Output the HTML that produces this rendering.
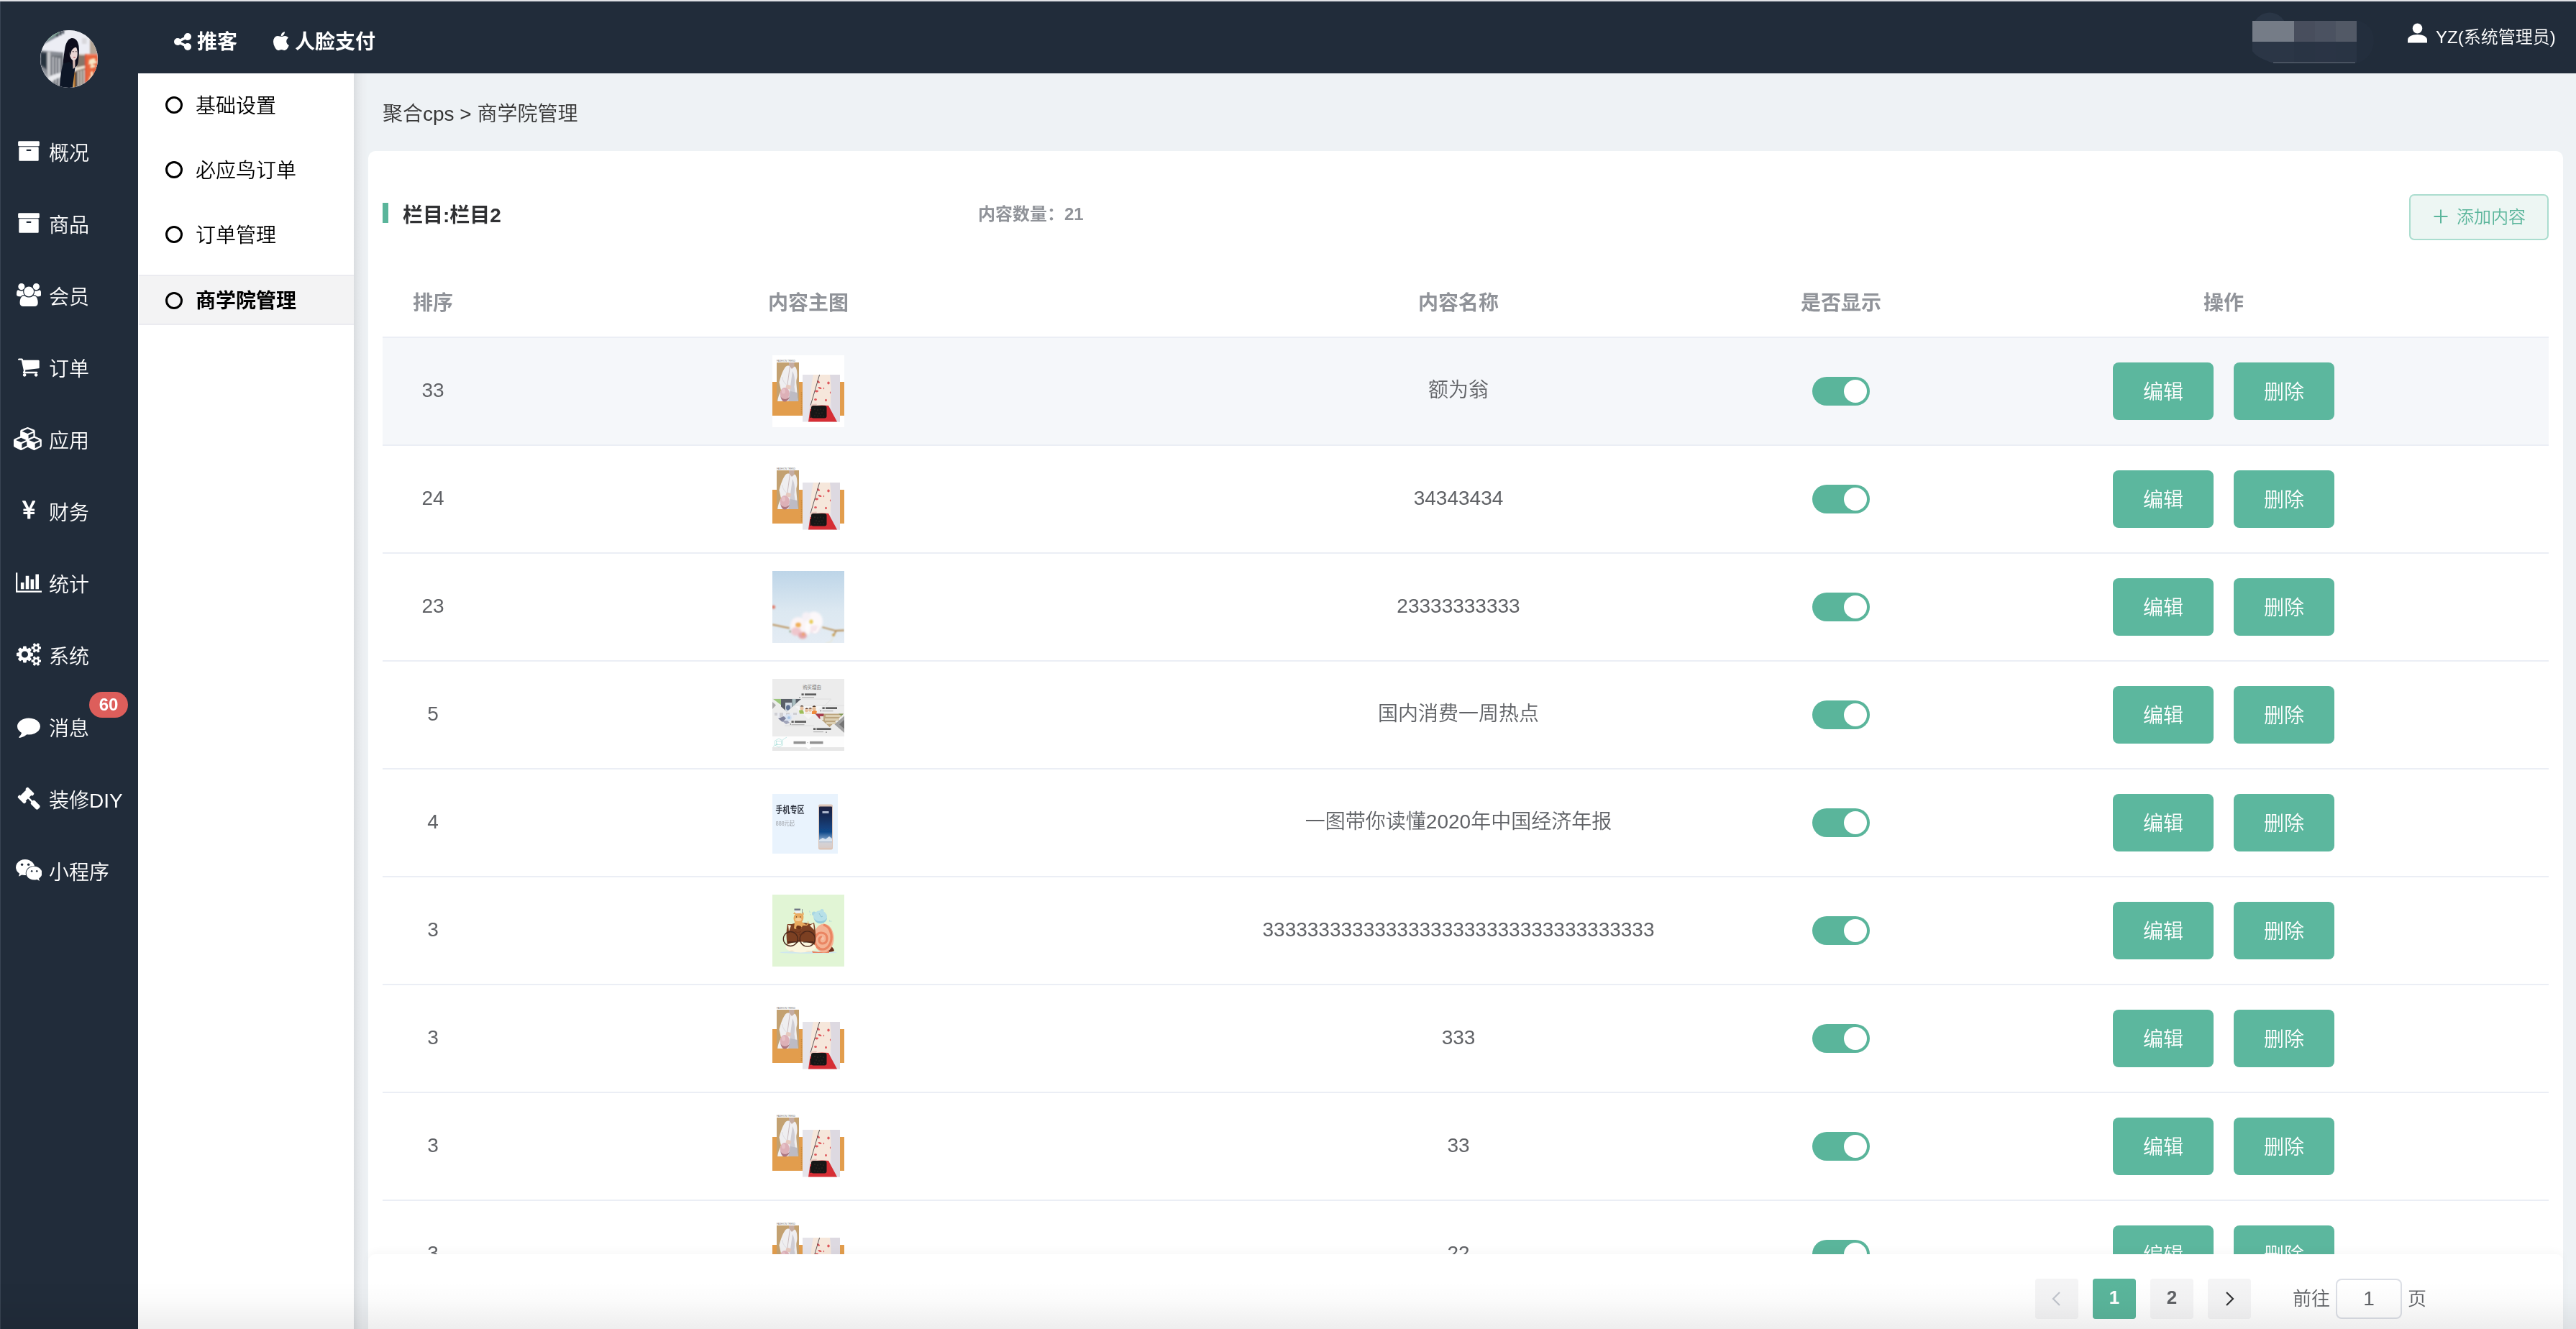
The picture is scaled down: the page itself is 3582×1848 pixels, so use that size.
<!DOCTYPE html>
<html lang="zh-CN"><head><meta charset="utf-8"><title>商学院管理</title>
<style>
*{box-sizing:border-box;margin:0;padding:0}
html,body{width:3582px;height:1848px;overflow:hidden}
body{position:relative;filter:opacity(1);background:#EEF2F5;font-family:"Liberation Sans","Noto Sans CJK SC",sans-serif;color:#606266;font-size:28px;font-weight:350}
.abs{position:absolute}
svg{display:block}
.fa{flex:none}
#topline{left:0;top:0;width:3582px;height:2px;background:linear-gradient(180deg,#DEDFE3 0,#DEDFE3 1px,#E8E9EE 1px,#E8E9EE 2px)}
#leftedge{left:0;top:2px;width:1px;height:1846px;background:#394453}
#left{left:0;top:2px;width:192px;height:1846px;background:#212C3A}
#top{left:192px;top:2px;width:3390px;height:100px;background:#212C3A}
.nav{position:absolute;left:0;width:192px;height:100px}
.nav .ic{position:absolute;left:0;top:-1px;width:80px;height:100px;display:flex;align-items:center;justify-content:center}
.nav .tx{position:absolute;left:68px;top:3px;height:100px;line-height:100px;font-size:28px;color:#fff;white-space:nowrap}
.badge{position:absolute;left:124px;top:962px;width:54px;height:36px;border-radius:18px;background:#DD5E5B;color:#fff;font-weight:bold;font-size:24px;line-height:36px;text-align:center}
.tnav{position:absolute;top:0;height:100px;line-height:100px;color:#fff;font-weight:bold;font-size:28px;white-space:nowrap}
.tnav svg{position:absolute;top:35px}
#side2{left:192px;top:102px;width:300px;height:1746px;background:#fff}
#shade{left:492px;top:102px;width:20px;height:1746px;background:linear-gradient(90deg,#DADDE0 0%,#E4E7EA 30%,#EBEEF1 60%,#EEF2F5 100%)}
.s2{position:absolute;left:0;width:300px;height:70px;line-height:70px;font-size:28px;color:#000;white-space:nowrap}
.s2 i{position:absolute;left:38px;top:23px;width:24px;height:24px;border:3.5px solid #000;border-radius:50%}
.s2 span{position:absolute;left:80px;top:1.5px}
.s2.on{left:1px;width:299px;background:#F3F3F4;border-top:2px solid #EBEBF0;border-bottom:2px solid #EBEBF0;font-weight:bold;line-height:66px}
.s2.on i{left:37px;top:22px}
.s2.on span{left:79px;top:1.5px}
#crumb{left:532px;top:129px;height:60px;line-height:60px;font-size:28px;color:#363636;white-space:nowrap}
#card{left:512px;top:210px;width:3052px;height:1700px;background:#fff;border-radius:10px}
#bar{left:532px;top:282px;width:8px;height:28px;background:#5AB59B}
#title{left:560px;top:269.5px;height:60px;line-height:60px;font-size:28px;font-weight:bold;color:#303133;white-space:nowrap}
#count{left:1360px;top:268px;height:60px;line-height:60px;font-size:24px;font-weight:bold;color:#909399;white-space:nowrap}
#add{left:3350px;top:270px;width:194px;height:64px;border:2px solid #ABDDCF;background:#EDF6F3;border-radius:7px;color:#5AB59B;font-size:24px;line-height:60px;white-space:nowrap}
#add svg{position:absolute;left:32px;top:19px}
#add span{position:absolute;left:64px;top:0}
.th{position:absolute;top:391.5px;height:60px;line-height:60px;font-size:28px;font-weight:bold;color:#909399;text-align:center;white-space:nowrap}
.hl{position:absolute;left:532px;width:3012px;height:2px;background:#EBEEF5}
.row{position:absolute;left:532px;width:3012px;height:148px}
.row.hov{background:#F5F7FA}
.c{position:absolute;top:0;height:148px;display:flex;align-items:center;justify-content:center;font-size:28px;color:#606266;white-space:nowrap}
.c1{left:0;width:140px}
.c2{left:140px;width:904px}
.c3{left:1044px;width:904px}
.c4{left:1948px;width:160px}
.c5{left:2108px;width:904px}
.c span{position:relative;top:-1.500px}
.c span.zh{top:-4px}
.img{position:absolute;left:542px;top:24px;width:100px;height:100px}
.sw{width:80px;height:40px;border-radius:20px;background:#5AB59B;position:relative}
.sw:after{content:"";position:absolute;left:44px;top:4px;width:32px;height:32px;border-radius:50%;background:#fff}
.btn{width:140px;height:80px;border-radius:8px;background:#5CB79E;color:#fff;font-size:28px;line-height:80px;text-align:center}
.btn+.btn{margin-left:28px}
.btn span{top:2px}
#pbar{left:512px;top:1744px;width:3052px;height:120px;background:#fff;border-radius:10px 10px 0 0;box-shadow:0 -4px 12px rgba(0,0,0,0.03)}
.pg{position:absolute;top:1778px;width:60px;height:56px;border-radius:4px;background:#F4F4F5;color:#606266;font-weight:bold;font-size:26px;line-height:53px;text-align:center}
.pg span{position:relative}
.pg.on{background:#5AB59B;color:#fff}
.pg svg{position:absolute;left:18px;top:16px}
#goto{left:3188px;top:1778px;height:56px;line-height:56px;font-size:26px;color:#606266;white-space:nowrap}
#pin{left:3248px;top:1778px;width:92px;height:56px;border:2px solid #DCDFE6;border-radius:8px;background:#fff;font-size:28px;line-height:52px;text-align:center;color:#606266}
#pye{left:3348px;top:1778px;height:56px;line-height:56px;font-size:26px;color:#606266}
#fade{left:0;top:1782px;width:3582px;height:66px;background:linear-gradient(180deg,rgba(0,0,0,0) 0%,rgba(0,0,0,0.014) 40%,rgba(0,0,0,0.065) 100%);pointer-events:none}
#user{left:3387px;top:22px;height:60px;line-height:60px;font-size:24px;color:#fff;white-space:nowrap}
</style></head>
<body><svg width="0" height="0" style="position:absolute"><defs>
<filter id="b05" x="-5%" y="-5%" width="110%" height="110%"><feGaussianBlur stdDeviation="0.5"/></filter>
<filter id="b07" x="-10%" y="-10%" width="120%" height="120%"><feGaussianBlur stdDeviation="0.75"/></filter>
<filter id="b1" x="-10%" y="-10%" width="120%" height="120%"><feGaussianBlur stdDeviation="1"/></filter>
<filter id="b2" x="-20%" y="-20%" width="140%" height="140%"><feGaussianBlur stdDeviation="1.8"/></filter>
<linearGradient id="sky" x1="0" y1="0" x2="0" y2="1"><stop offset="0" stop-color="#BDD5E8"/><stop offset="0.55" stop-color="#DCE8F1"/><stop offset="1" stop-color="#E4ECF4"/></linearGradient>
<linearGradient id="scr" x1="0" y1="0" x2="0" y2="1"><stop offset="0" stop-color="#1C2040"/><stop offset="0.3" stop-color="#14305F"/><stop offset="0.62" stop-color="#114A8C"/><stop offset="0.8" stop-color="#7FA2C8"/><stop offset="0.88" stop-color="#D4D2D6"/><stop offset="1" stop-color="#D8CCC8"/></linearGradient>
<symbol id="bag" viewBox="0 0 100 100">
<rect width="100" height="100" fill="#fff"/>
<rect x="0" y="37" width="100" height="47" fill="#E29D4D"/>
<text x="6" y="8.600" font-size="3" fill="#777" font-family="Liberation Sans,sans-serif" textLength="26" lengthAdjust="spacingAndGlyphs">FASHION TREND</text>
<g filter="url(#b05)">
<rect x="6" y="10" width="31" height="54" fill="#C3A171"/>
<path d="M23 10h7.500v6l-3 4-4.500-3z" fill="#C5ADA2"/>
<path d="M18 16.500C20 14.500 22 14 24 15L27 19L31 15.500C33.500 17 34.500 21 34.500 28C34.500 32 33 34 33.300 38L35.500 64H7.200C7.500 60 9 55 12 49L9.500 37.500C11.500 30 14 22 18 16.500Z" fill="#EFEEF0"/>
<path d="M28 22C31 28 32 36 30.500 44L34 64H22L25 43Z" fill="#CFCDD4"/>
<path d="M22.500 64L25 50L35 52L35.500 64Z" fill="#BDBBC4"/>
<path d="M24.500 15L20.500 44" stroke="#B9A5A8" stroke-width="0.700" fill="none"/>
<path d="M13.500 30C14.500 35 17 40 21 42" stroke="#D9D7DC" stroke-width="0.900" fill="none"/>
<path d="M19.500 41.500C22 40.500 25 41.500 26.500 43.500L24.500 47.500C22 47.500 20 46.500 18.500 44.500Z" fill="#E6C9BE"/>
<ellipse cx="17.300" cy="53.300" rx="6.600" ry="8.200" fill="#DDB0B7"/>
<path d="M11 56C13 61.500 19.500 63 23.800 57.500C23 62 20 64.500 17 64.500S12 61 11 56Z" fill="#AC7782"/>
<ellipse cx="15.500" cy="50" rx="2.500" ry="3.500" fill="#E9C6CB" opacity="0.800"/>
</g>
<path d="M40.500 51v31" stroke="#B97B2E" stroke-width="1.600" stroke-dasharray="1.600 1" opacity="0.600" fill="none"/>
<g filter="url(#b05)">
<rect x="42" y="27" width="52" height="65.500" fill="#E5E3E9"/>
<path d="M78 27h16v65.500H84z" fill="#DDD9E1"/>
<path d="M57 27h23c2 14 2 30 0 45H54c-2-14 0-32 3-45z" fill="#F6E7DB"/>
<path d="M53 72c8-3 17-3 25-2l12 22.500H50z" fill="#D62F36"/>
<g fill="#DC4A4E" opacity="0.900"><ellipse cx="64" cy="37" rx="2.300" ry="1.300" transform="rotate(40 64 37)"/><ellipse cx="78" cy="38.500" rx="1.700" ry="1.900"/><ellipse cx="66" cy="45.500" rx="2.600" ry="1.200" transform="rotate(20 66 45.500)"/><ellipse cx="61.500" cy="50" rx="2.500" ry="1.400"/><ellipse cx="60" cy="61.500" rx="1.900" ry="1.600"/><ellipse cx="74.500" cy="62.500" rx="1.400" ry="1.800"/><ellipse cx="80.500" cy="52" rx="0.600" ry="1.400"/><ellipse cx="71.500" cy="46" rx="0.700" ry="1.200"/></g>
<path d="M65.600 27L53 70" stroke="#3A3437" stroke-width="0.800" fill="none"/>
<path d="M52 70c3-2 7-3 10-2l-2 5-7 2z" fill="#EBC7BE"/>
<rect x="54" y="70" width="21.500" height="17.500" rx="3" fill="#171515"/>
<rect x="52.500" y="78" width="2" height="9" fill="#1c1919"/>
<g fill="#5B4A3A"><circle cx="59" cy="75" r="0.500"/><circle cx="63" cy="76" r="0.500"/><circle cx="67" cy="75" r="0.500"/><circle cx="71" cy="76" r="0.500"/><circle cx="61" cy="80" r="0.500"/><circle cx="65" cy="81" r="0.500"/><circle cx="69" cy="80" r="0.500"/><circle cx="59" cy="84" r="0.500"/><circle cx="63" cy="84.500" r="0.500"/><circle cx="67" cy="84" r="0.500"/><circle cx="71" cy="84.500" r="0.500"/></g>
</g>
</symbol>
</defs></svg>
<div class="abs" id="left"></div><div class="abs" id="top"></div><div class="abs" id="topline"></div><div class="abs" id="leftedge"></div>
<div class="abs" id="avatar" style="left:56px;top:42px;width:80px;height:80px;border-radius:50%;overflow:hidden;background:#ccc"><svg width="80" height="80" viewBox="0 0 80 80"><rect width="80" height="80" fill="#ECEDF4"/>
<g filter="url(#b1)">
<path d="M0 0h34l-8 8L0 22z" fill="#7C8490"/>
<path d="M22 0h3v9h-3zM27 0h2.500v7H27zM31 0h2v5h-2z" fill="#2E3642"/>
<path d="M8 14L26 2" stroke="#7DB89A" stroke-width="1.600"/>
<path d="M0 28l32 3v49H0z" fill="#8A8E96"/>
<path d="M58 11h6.500v8H58z" fill="#D9D8DC"/>
<path d="M69 4h11v31H69z" fill="#B5A595"/>
<path d="M52 33h12v47H46z" fill="#85766A"/>
<path d="M54 33h26v2H54z" fill="#CFC6C0"/>
<path d="M0 30l9 1v24l-9-6z" fill="#39434F"/>
<path d="M1 33h7v18l-7-4z" fill="#27313D"/>
<path d="M10 30h4v50h-4z" fill="#C6C7CB"/>
<path d="M15 35h16v45H15z" fill="#70747B"/>
<path d="M17 37h2v36h-2zM21 38h2v36h-2zM25 39h2.500v38H25z" fill="#C3C5CA"/>
<path d="M19 38h2v34h-2zM23 39h2v35h-2z" fill="#3E4650"/>
<path d="M0 54l10 8v18H0z" fill="#A2A6AE"/>
<path d="M11 66c5-4 12-6 18-7l2 6c-8 1-14 5-18 9z" fill="#E9EAEE"/>
<path d="M10 72l4-4 4 12h-6z" fill="#D9DADF"/>
<path d="M49 52l14-3v3.500l-14 4z" fill="#EFE3D4"/>
<path d="M52 57h1.600v23H52zM56 56h1.600v24H56zM60 55h1.600v25H60z" fill="#D8D4CF"/>
<path d="M48 58h3v22h-3z" fill="#3C3A3A"/>
<path d="M45.500 58h2.500v22h-2.500z" fill="#D98B20"/>
<path d="M62 33h18v40l-18 7z" fill="#E8653C"/>
<path d="M62 33h18v2H62z" fill="#F0866A"/>
<path d="M62 33h1.600v47H62z" fill="#D9482E"/>
</g>
<g filter="url(#b07)">
<path d="M43.500 11C49 10.500 52.500 15 53.500 22C54.500 29 53.500 36 53 42C52.800 46 51.500 49.500 49.500 51L47 52L36 50L31.500 47C32 40 33 33 34 27C35 19 38 12 43.500 11Z" fill="#0B111F"/>
<path d="M31.500 47L40 44L48.500 51.500C47.500 60 46 70 45 80L27 80C27.500 68 29 56 31.500 47Z" fill="#0D1626"/>
<path d="M45 41L48.500 41.500L48.500 51.500L45.500 54Z" fill="#D6BAB4"/>
<path d="M42.500 23C45.500 21.500 50 22.500 51 26C52 30 52 35 51 38C50 41 48 42.500 45.500 42C43.500 41 41.500 38 40.800 34C40.300 29.500 40.500 25.500 42.500 23Z" fill="#E9D5D3"/>
<path d="M40 24C43 21 48 21 51 23.500C47.500 23.500 45 25.500 43.500 28.500L41.500 35C39.800 31 39.500 27 40 24Z" fill="#0B111F"/>
<path d="M44.500 29.800h2.600M48.800 29.800h2" stroke="#4A3A40" stroke-width="0.900"/>
<path d="M46.200 37.600h2.600" stroke="#B8646E" stroke-width="1.300"/>
</g>
<g filter="url(#b1)" fill="#F9E6C4"><path d="M68 41l6-2 3 1-1 3 3 0-1 3-5 1 1 4-3 1-1-5-3 1zM69 50l7-2 1 3-7 2z"/><path d="M70 58l3-1 1 14-3 4zM67 70l2-6 2 1-2 8z"/></g>
</svg></div>
<div class="nav" style="top:161px"><span class="ic"><svg class="fa" style="width:32.00px;height:32px;" viewBox="0 -1536 1792 1792"><path fill="#fff" transform="scale(1,-1)" d="M1024 768H768Q742 768 723 749Q704 730 704 704Q704 678 723 659Q742 640 768 640H1024Q1050 640 1069 659Q1088 678 1088 704Q1088 730 1069 749Q1050 768 1024 768ZM1664 896V-64Q1664 -90 1645 -109Q1626 -128 1600 -128H192Q166 -128 147 -109Q128 -90 128 -64V896Q128 922 147 941Q166 960 192 960H1600Q1626 960 1645 941Q1664 922 1664 896ZM1728 1344V1088Q1728 1062 1709 1043Q1690 1024 1664 1024H128Q102 1024 83 1043Q64 1062 64 1088V1344Q64 1370 83 1389Q102 1408 128 1408H1664Q1690 1408 1709 1389Q1728 1370 1728 1344Z"/></svg></span><span class="tx">概况</span></div>
<div class="nav" style="top:261px"><span class="ic"><svg class="fa" style="width:32.00px;height:32px;" viewBox="0 -1536 1792 1792"><path fill="#fff" transform="scale(1,-1)" d="M1024 768H768Q742 768 723 749Q704 730 704 704Q704 678 723 659Q742 640 768 640H1024Q1050 640 1069 659Q1088 678 1088 704Q1088 730 1069 749Q1050 768 1024 768ZM1664 896V-64Q1664 -90 1645 -109Q1626 -128 1600 -128H192Q166 -128 147 -109Q128 -90 128 -64V896Q128 922 147 941Q166 960 192 960H1600Q1626 960 1645 941Q1664 922 1664 896ZM1728 1344V1088Q1728 1062 1709 1043Q1690 1024 1664 1024H128Q102 1024 83 1043Q64 1062 64 1088V1344Q64 1370 83 1389Q102 1408 128 1408H1664Q1690 1408 1709 1389Q1728 1370 1728 1344Z"/></svg></span><span class="tx">商品</span></div>
<div class="nav" style="top:361px"><span class="ic"><svg class="fa" style="width:34.29px;height:32px;" viewBox="0 -1536 1920 1792"><path fill="#fff" transform="scale(1,-1)" d="M593 640Q431 635 328 512H194Q112 512 56 552Q0 593 0 671Q0 1024 124 1024Q130 1024 168 1003Q205 982 265 960Q325 939 384 939Q451 939 517 962Q512 925 512 896Q512 757 593 640ZM1664 3Q1664 -117 1591 -186Q1518 -256 1397 -256H523Q402 -256 329 -186Q256 -117 256 3Q256 56 260 106Q263 157 274 216Q284 274 300 324Q316 374 343 422Q370 469 405 502Q440 536 490 556Q541 576 602 576Q612 576 645 554Q678 533 718 506Q758 480 825 458Q892 437 960 437Q1028 437 1095 458Q1162 480 1202 506Q1242 533 1275 554Q1308 576 1318 576Q1379 576 1430 556Q1480 536 1515 502Q1550 469 1577 422Q1604 374 1620 324Q1636 274 1646 216Q1657 157 1660 106Q1664 56 1664 3ZM565 1461Q640 1386 640 1280Q640 1174 565 1099Q490 1024 384 1024Q278 1024 203 1099Q128 1174 128 1280Q128 1386 203 1461Q278 1536 384 1536Q490 1536 565 1461ZM1232 1168Q1344 1055 1344 896Q1344 737 1232 624Q1119 512 960 512Q801 512 688 624Q576 737 576 896Q576 1055 688 1168Q801 1280 960 1280Q1119 1280 1232 1168ZM1920 671Q1920 593 1864 552Q1808 512 1726 512H1592Q1489 635 1327 640Q1408 757 1408 896Q1408 925 1403 962Q1469 939 1536 939Q1595 939 1655 960Q1715 982 1752 1003Q1790 1024 1796 1024Q1920 1024 1920 671ZM1717 1461Q1792 1386 1792 1280Q1792 1174 1717 1099Q1642 1024 1536 1024Q1430 1024 1355 1099Q1280 1174 1280 1280Q1280 1386 1355 1461Q1430 1536 1536 1536Q1642 1536 1717 1461Z"/></svg></span><span class="tx">会员</span></div>
<div class="nav" style="top:461px"><span class="ic"><svg class="fa" style="width:29.71px;height:32px;" viewBox="0 -1536 1664 1792"><path fill="#fff" transform="scale(1,-1)" d="M602 90Q640 52 640 0Q640 -52 602 -90Q564 -128 512 -128Q460 -128 422 -90Q384 -52 384 0Q384 52 422 90Q460 128 512 128Q564 128 602 90ZM1498 90Q1536 52 1536 0Q1536 -52 1498 -90Q1460 -128 1408 -128Q1356 -128 1318 -90Q1280 -52 1280 0Q1280 52 1318 90Q1356 128 1408 128Q1460 128 1498 90ZM1664 1088V576Q1664 552 1648 534Q1631 515 1607 512L563 390Q576 330 576 320Q576 304 552 256H1472Q1498 256 1517 237Q1536 218 1536 192Q1536 166 1517 147Q1498 128 1472 128H448Q422 128 403 147Q384 166 384 192Q384 203 392 224Q400 244 408 260Q416 275 430 300Q443 324 445 329L268 1152H64Q38 1152 19 1171Q0 1190 0 1216Q0 1242 19 1261Q38 1280 64 1280H320Q336 1280 348 1274Q361 1267 368 1258Q375 1249 381 1234Q387 1218 389 1208Q391 1197 394 1178Q398 1159 399 1152H1600Q1626 1152 1645 1133Q1664 1114 1664 1088Z"/></svg></span><span class="tx">订单</span></div>
<div class="nav" style="top:561px"><span class="ic"><svg class="fa" style="width:41.14px;height:32px;" viewBox="0 -1536 2304 1792"><path fill="#fff" transform="scale(1,-1)" d="M640 -96 1024 96V410L640 246ZM576 358 980 531 576 704 172 531ZM1664 -96 2048 96V410L1664 246ZM1600 358 2004 531 1600 704 1196 531ZM1152 651 1536 816V1082L1152 918ZM1088 1030 1529 1219 1088 1408 647 1219ZM2176 512V96Q2176 60 2157 29Q2138 -2 2105 -18L1657 -242Q1632 -256 1600 -256Q1568 -256 1543 -242L1095 -18Q1091 -16 1088 -14Q1086 -16 1081 -18L633 -242Q608 -256 576 -256Q544 -256 519 -242L71 -18Q38 -2 19 29Q0 60 0 96V512Q0 550 22 582Q43 614 78 630L512 816V1216Q512 1254 534 1286Q555 1318 590 1334L1038 1526Q1061 1536 1088 1536Q1115 1536 1138 1526L1586 1334Q1621 1318 1642 1286Q1664 1254 1664 1216V816L2098 630Q2134 614 2155 582Q2176 550 2176 512Z"/></svg></span><span class="tx">应用</span></div>
<div class="nav" style="top:661px"><span class="ic"><svg class="fa" style="width:18.34px;height:32px;" viewBox="0 -1536 1027 1792"><path fill="#fff" transform="scale(1,-1)" d="M603 0H431Q418 0 408 9Q399 18 399 32V362H111Q98 362 88 371Q79 380 79 394V497Q79 510 88 520Q98 529 111 529H399V614H111Q98 614 88 623Q79 632 79 646V750Q79 763 88 772Q98 782 111 782H325L4 1360Q-4 1376 4 1392Q14 1408 32 1408H226Q245 1408 255 1390L470 965Q489 927 526 840Q536 864 556 908Q577 952 584 969L775 1389Q783 1408 804 1408H995Q1012 1408 1022 1392Q1031 1378 1023 1361L710 782H925Q938 782 948 772Q957 763 957 750V646Q957 632 948 623Q938 614 925 614H635V529H925Q938 529 948 520Q957 510 957 497V394Q957 380 948 371Q938 362 925 362H635V32Q635 19 626 10Q616 0 603 0Z"/></svg></span><span class="tx">财务</span></div>
<div class="nav" style="top:761px"><span class="ic"><svg class="fa" style="width:36.57px;height:32px;" viewBox="0 -1536 2048 1792"><path fill="#fff" transform="scale(1,-1)" d="M640 640V128H384V640ZM1024 1152V128H768V1152ZM2048 0V-128H0V1408H128V0ZM1408 896V128H1152V896ZM1792 1280V128H1536V1280Z"/></svg></span><span class="tx">统计</span></div>
<div class="nav" style="top:861px"><span class="ic"><svg class="fa" style="width:34.29px;height:32px;" viewBox="0 -1536 1920 1792"><path fill="#fff" transform="scale(1,-1)" d="M821 459Q896 534 896 640Q896 746 821 821Q746 896 640 896Q534 896 459 821Q384 746 384 640Q384 534 459 459Q534 384 640 384Q746 384 821 459ZM1664 128Q1664 180 1626 218Q1588 256 1536 256Q1484 256 1446 218Q1408 180 1408 128Q1408 75 1446 38Q1483 0 1536 0Q1589 0 1626 38Q1664 75 1664 128ZM1664 1152Q1664 1204 1626 1242Q1588 1280 1536 1280Q1484 1280 1446 1242Q1408 1204 1408 1152Q1408 1099 1446 1062Q1483 1024 1536 1024Q1589 1024 1626 1062Q1664 1099 1664 1152ZM1280 731V546Q1280 536 1273 526Q1266 517 1257 516L1102 492Q1091 457 1070 416Q1104 368 1160 301Q1167 290 1167 281Q1167 269 1160 262Q1137 232 1078 172Q1018 113 999 113Q988 113 978 120L863 210Q826 191 786 179Q775 71 763 24Q756 0 733 0H547Q536 0 527 8Q518 15 517 25L494 178Q460 188 419 209L301 120Q294 113 281 113Q270 113 260 121Q116 254 116 281Q116 290 123 300Q133 314 164 353Q195 392 211 414Q188 458 176 496L24 520Q14 521 7 530Q0 538 0 549V734Q0 744 7 754Q14 763 23 764L178 788Q189 823 210 864Q176 912 120 979Q113 990 113 999Q113 1011 120 1019Q142 1049 202 1108Q262 1167 281 1167Q292 1167 302 1160L417 1070Q451 1088 494 1102Q505 1210 517 1256Q524 1280 547 1280H733Q744 1280 753 1272Q762 1265 763 1255L786 1102Q820 1092 861 1071L979 1160Q987 1167 999 1167Q1010 1167 1020 1159Q1164 1026 1164 999Q1164 991 1157 980Q1145 964 1115 926Q1085 888 1070 866Q1093 818 1104 784L1256 761Q1266 759 1273 750Q1280 742 1280 731ZM1920 198V58Q1920 42 1771 27Q1759 0 1741 -25Q1792 -138 1792 -163Q1792 -167 1788 -170Q1666 -241 1664 -241Q1656 -241 1618 -194Q1580 -147 1566 -126Q1546 -128 1536 -128Q1526 -128 1506 -126Q1492 -147 1454 -194Q1416 -241 1408 -241Q1406 -241 1284 -170Q1280 -167 1280 -163Q1280 -138 1331 -25Q1313 0 1301 27Q1152 42 1152 58V198Q1152 214 1301 229Q1314 258 1331 281Q1280 394 1280 419Q1280 423 1284 426Q1288 428 1319 446Q1350 464 1378 480Q1406 496 1408 496Q1416 496 1454 450Q1492 403 1506 382Q1526 384 1536 384Q1546 384 1566 382Q1617 453 1658 494L1664 496Q1668 496 1788 426Q1792 423 1792 419Q1792 394 1741 281Q1758 258 1771 229Q1920 214 1920 198ZM1920 1222V1082Q1920 1066 1771 1051Q1759 1024 1741 999Q1792 886 1792 861Q1792 857 1788 854Q1666 783 1664 783Q1656 783 1618 830Q1580 877 1566 898Q1546 896 1536 896Q1526 896 1506 898Q1492 877 1454 830Q1416 783 1408 783Q1406 783 1284 854Q1280 857 1280 861Q1280 886 1331 999Q1313 1024 1301 1051Q1152 1066 1152 1082V1222Q1152 1238 1301 1253Q1314 1282 1331 1305Q1280 1418 1280 1443Q1280 1447 1284 1450Q1288 1452 1319 1470Q1350 1488 1378 1504Q1406 1520 1408 1520Q1416 1520 1454 1474Q1492 1427 1506 1406Q1526 1408 1536 1408Q1546 1408 1566 1406Q1617 1477 1658 1518L1664 1520Q1668 1520 1788 1450Q1792 1447 1792 1443Q1792 1418 1741 1305Q1758 1282 1771 1253Q1920 1238 1920 1222Z"/></svg></span><span class="tx">系统</span></div>
<div class="nav" style="top:961px"><span class="ic"><svg class="fa" style="width:32.00px;height:32px;" viewBox="0 -1536 1792 1792"><path fill="#fff" transform="scale(1,-1)" d="M896 0Q826 0 751 8Q553 -167 291 -234Q242 -248 177 -256Q160 -258 146 -247Q133 -236 129 -218V-217Q126 -213 128 -205Q131 -197 130 -195Q130 -193 135 -186Q140 -178 141 -176Q142 -175 148 -168Q154 -161 156 -159Q163 -151 187 -124Q211 -98 222 -86Q232 -75 252 -47Q273 -19 285 4Q297 27 312 63Q327 99 338 139Q181 228 90 359Q0 490 0 640Q0 770 71 888Q142 1007 262 1093Q382 1179 548 1230Q714 1280 896 1280Q1140 1280 1346 1194Q1552 1109 1672 962Q1792 814 1792 640Q1792 466 1672 318Q1552 171 1346 86Q1140 0 896 0Z"/></svg></span><span class="tx">消息</span></div>
<div class="nav" style="top:1061px"><span class="ic"><svg class="fa" style="width:32.00px;height:32px;" viewBox="0 -1536 1792 1792"><path fill="#fff" transform="scale(1,-1)" d="M1771 0Q1771 -53 1734 -90L1627 -198Q1588 -235 1536 -235Q1483 -235 1446 -198L1083 166Q1045 202 1045 256Q1045 309 1088 352L832 608L706 482Q692 468 672 468Q652 468 638 482Q640 480 650 470Q661 460 663 457Q665 454 673 446Q681 437 683 432Q685 427 689 418Q693 410 694 402Q696 394 696 384Q696 346 668 316Q665 313 652 298Q638 283 632 278Q627 272 614 261Q601 250 592 246Q583 241 570 236Q557 232 544 232Q504 232 476 260L68 668Q40 696 40 736Q40 749 44 762Q49 775 54 784Q58 793 69 806Q80 819 86 824Q91 830 106 844Q121 857 124 860Q154 888 192 888Q202 888 210 886Q218 885 226 881Q235 877 240 875Q245 873 254 865Q262 857 265 855Q268 853 278 842Q288 832 290 830Q276 844 276 864Q276 884 290 898L638 1246Q652 1260 672 1260Q692 1260 706 1246Q704 1248 694 1258Q683 1268 681 1271Q679 1274 671 1282Q663 1291 661 1296Q659 1301 655 1310Q651 1318 650 1326Q648 1334 648 1344Q648 1382 676 1412Q679 1415 692 1430Q706 1445 712 1450Q717 1456 730 1467Q743 1478 752 1482Q761 1487 774 1492Q787 1496 800 1496Q840 1496 868 1468L1276 1060Q1304 1032 1304 992Q1304 979 1300 966Q1295 953 1290 944Q1286 935 1275 922Q1264 909 1258 904Q1253 898 1238 884Q1223 871 1220 868Q1190 840 1152 840Q1142 840 1134 842Q1126 843 1118 847Q1109 851 1104 853Q1099 855 1090 863Q1082 871 1079 873Q1076 875 1066 886Q1056 896 1054 898Q1068 884 1068 864Q1068 844 1054 830L928 704L1184 448Q1227 491 1280 491Q1332 491 1371 454L1734 91Q1771 52 1771 0Z"/></svg></span><span class="tx">装修DIY</span></div>
<div class="nav" style="top:1161px"><span class="ic"><svg class="fa" style="width:36.57px;height:32px;" viewBox="0 -1536 2048 1792"><path fill="#fff" transform="scale(1,-1)" d="M489 1166Q446 1166 413 1140Q380 1115 380 1075Q380 1036 413 1010Q446 985 489 985Q530 985 555 1010Q580 1034 580 1075Q580 1116 555 1141Q530 1166 489 1166ZM1323 568Q1323 596 1298 618Q1272 640 1232 640Q1205 640 1182 618Q1160 595 1160 568Q1160 540 1182 518Q1205 495 1232 495Q1272 495 1298 517Q1323 539 1323 568ZM997 1166Q954 1166 921 1140Q888 1115 888 1075Q888 1036 921 1010Q954 985 997 985Q1038 985 1062 1010Q1087 1034 1087 1075Q1087 1116 1062 1141Q1038 1166 997 1166ZM1722 568Q1722 596 1696 618Q1670 640 1631 640Q1604 640 1582 618Q1559 595 1559 568Q1559 540 1582 518Q1604 495 1631 495Q1670 495 1696 517Q1722 539 1722 568ZM1456 965Q1425 969 1386 969Q1217 969 1075 892Q933 815 852 684Q770 552 770 396Q770 318 793 244Q758 241 725 241Q699 241 675 242Q651 244 620 249Q589 254 576 256Q562 258 521 266Q480 275 471 277L218 150L290 368Q0 571 0 858Q0 1027 98 1169Q195 1311 362 1392Q528 1474 725 1474Q901 1474 1058 1408Q1214 1342 1320 1226Q1425 1109 1456 965ZM2048 404Q2048 287 1980 180Q1911 74 1794 -13L1849 -194L1650 -85Q1500 -122 1432 -122Q1263 -122 1121 -52Q979 19 898 140Q816 261 816 404Q816 547 898 668Q979 789 1121 860Q1263 930 1432 930Q1593 930 1735 860Q1877 789 1962 668Q2048 546 2048 404Z"/></svg></span><span class="tx">小程序</span></div>
<div class="badge">60</div>
<div class="tnav" style="left:242px;top:9px"><svg class="fa" style="width:24.00px;height:28px;left:0" viewBox="0 -1536 1536 1792"><path fill="#fff" transform="scale(1,-1)" d="M1216 512Q1349 512 1442 418Q1536 325 1536 192Q1536 59 1442 -34Q1349 -128 1216 -128Q1083 -128 990 -34Q896 59 896 192Q896 204 898 226L538 406Q446 320 320 320Q187 320 94 414Q0 507 0 640Q0 773 94 866Q187 960 320 960Q446 960 538 874L898 1054Q896 1076 896 1088Q896 1221 990 1314Q1083 1408 1216 1408Q1349 1408 1442 1314Q1536 1221 1536 1088Q1536 955 1442 862Q1349 768 1216 768Q1090 768 998 854L638 674Q640 652 640 640Q640 628 638 606L998 426Q1090 512 1216 512Z"/></svg><span style="margin-left:32px">推客</span></div>
<div class="tnav" style="left:380px;top:9px"><svg class="fa" style="width:22.00px;height:28px;left:0" viewBox="0 -1536 1408 1792"><path fill="#fff" transform="scale(1,-1)" d="M1393 321Q1354 196 1270 71Q1141 -125 1013 -125Q964 -125 873 -93Q787 -61 722 -61Q661 -61 580 -94Q499 -128 448 -128Q296 -128 147 131Q0 392 0 634Q0 862 113 1008Q226 1152 397 1152Q469 1152 574 1122Q678 1092 712 1092Q757 1092 855 1126Q957 1160 1028 1160Q1147 1160 1241 1095Q1293 1059 1345 995Q1266 928 1231 877Q1166 783 1166 670Q1166 546 1235 447Q1304 348 1393 321ZM1017 1494Q1017 1433 988 1358Q958 1283 895 1220Q841 1166 787 1148Q750 1137 683 1131Q686 1280 761 1388Q835 1495 1011 1536Q1012 1533 1014 1525Q1015 1517 1016 1514Q1016 1510 1016 1504Q1017 1498 1017 1494Z"/></svg><span style="margin-left:30px">人脸支付</span></div>
<svg class="abs" style="left:3120px;top:12px" width="200" height="84" viewBox="3120 12 200 84">
<clipPath id="blc"><path d="M3132 29H3277V87.500H3160C3148 83 3136 78 3132 71Z"/></clipPath>
<circle cx="3156" cy="41" r="23.500" fill="#2A3646"/>
<path d="M3277 28c14 3 24 13 24 28 0 14-7 25-20 31h-4z" fill="#232E3D"/>
<g clip-path="url(#blc)">
<rect x="3132" y="58" width="145" height="29" fill="#293444"/>
<rect x="3132" y="58" width="58" height="29" fill="#2B3646"/>
<rect x="3219" y="58" width="29" height="29" fill="#2A3445"/>
<rect x="3132" y="29" width="58" height="29" fill="#757C87"/>
<rect x="3190" y="29" width="29" height="29" fill="#484E5D"/>
<rect x="3219" y="29" width="29" height="29" fill="#4B5261"/>
<rect x="3248" y="29" width="29" height="29" fill="#525966"/>
</g>
<rect x="3161" y="86.600" width="114" height="0.900" fill="#8A919D" opacity="0.800"/>
</svg>
<svg class="abs" style="left:3348px;top:32px" width="27" height="28" viewBox="0 0 28 28" preserveAspectRatio="none"><circle cx="14" cy="7.5" r="7" fill="#fff"/><path fill="#fff" d="M0 27.5v-4.2c0-4.2 6-7.3 14-7.3s14 3.100 14 7.300v4.200z"/></svg>
<div class="abs" id="user">YZ(系统管理员)</div>
<div class="abs" id="side2">
<div class="s2" style="top:9px"><i></i><span>基础设置</span></div>
<div class="s2" style="top:99px"><i></i><span>必应鸟订单</span></div>
<div class="s2" style="top:189px"><i></i><span>订单管理</span></div>
<div class="s2 on" style="top:280px"><i></i><span>商学院管理</span></div>
</div><div class="abs" id="shade"></div>
<div class="abs" id="crumb">聚合cps &gt; 商学院管理</div>
<div class="abs" id="card"></div>
<div class="abs" id="bar"></div><div class="abs" id="title">栏目:栏目2</div><div class="abs" id="count">内容数量：21</div>
<div class="abs" id="add"><svg width="20" height="20" viewBox="0 0 20 20"><path d="M10 0.500v19M0.500 10h19" stroke="#5AB59B" stroke-width="2" fill="none"/></svg><span>添加内容</span></div>
<div class="th" style="left:532px;width:140px">排序</div>
<div class="th" style="left:672px;width:904px">内容主图</div>
<div class="th" style="left:1576px;width:904px">内容名称</div>
<div class="th" style="left:2480px;width:160px">是否显示</div>
<div class="th" style="left:2640px;width:904px">操作</div>
<div class="hl" style="top:468px"></div>
<div class="row hov" style="top:470px"><div class="c c1"><span>33</span></div><div class="img"><svg width="100" height="100" viewBox="0 0 100 100"><use href="#bag"/></svg></div><div class="c c3"><span class="zh">额为翁</span></div><div class="c c4"><div class="sw"></div></div><div class="c c5"><div class="btn"><span>编辑</span></div><div class="btn"><span>删除</span></div></div></div><div class="hl" style="top:618px"></div>
<div class="row" style="top:620px"><div class="c c1"><span>24</span></div><div class="img"><svg width="100" height="100" viewBox="0 0 100 100"><use href="#bag"/></svg></div><div class="c c3"><span>34343434</span></div><div class="c c4"><div class="sw"></div></div><div class="c c5"><div class="btn"><span>编辑</span></div><div class="btn"><span>删除</span></div></div></div><div class="hl" style="top:768px"></div>
<div class="row" style="top:770px"><div class="c c1"><span>23</span></div><div class="img"><svg width="100" height="100" viewBox="0 0 100 100"><rect width="100" height="100" fill="url(#sky)"/>
<g filter="url(#b1)">
<path d="M0 74.500L24 79.500" stroke="#B98E52" stroke-width="1.800" fill="none"/>
<path d="M69 78l19 5 12-0.500M88.500 83.500l-4 7" stroke="#B48748" stroke-width="1.800" fill="none"/>
<path d="M86 88l-4 10-8 3" stroke="#E8E4C8" stroke-width="1" fill="none"/>
<circle cx="1.500" cy="50" r="2.600" fill="#DE7F6E"/>
<circle cx="25" cy="84" r="1.300" fill="#6E8A58"/>
<circle cx="85" cy="89" r="2" fill="#C9A050"/>
</g>
<g filter="url(#b2)">
<ellipse cx="36" cy="76" rx="11" ry="12" fill="#FBF4F6"/>
<ellipse cx="33" cy="84" rx="7" ry="6" fill="#EFC6CC"/>
<ellipse cx="58" cy="70" rx="12" ry="13.500" fill="#FCF8FA"/>
<ellipse cx="47" cy="63" rx="6" ry="6" fill="#F6F1F6"/>
<ellipse cx="58" cy="81" rx="8" ry="5.500" fill="#F6E6EC"/>
<ellipse cx="49" cy="80" rx="4" ry="9" fill="#FDFBFC"/>
<ellipse cx="42" cy="89.500" rx="6" ry="4.800" fill="#E5A3A6"/>
</g>
<g filter="url(#b1)">
<ellipse cx="36" cy="75" rx="3.800" ry="3.300" fill="#F0AE58"/>
<ellipse cx="54" cy="70.500" rx="2.600" ry="3" fill="#E9CC5A"/>
<ellipse cx="43" cy="88" rx="1.600" ry="2" fill="#EFA45E"/>
<path d="M57 84c3 3 6 0 7-6" stroke="#fff" stroke-width="2" fill="none"/>
</g></svg></div><div class="c c3"><span>23333333333</span></div><div class="c c4"><div class="sw"></div></div><div class="c c5"><div class="btn"><span>编辑</span></div><div class="btn"><span>删除</span></div></div></div><div class="hl" style="top:918px"></div>
<div class="row" style="top:920px"><div class="c c1"><span>5</span></div><div class="img"><svg width="100" height="100" viewBox="0 0 100 100" font-family="Liberation Sans,Noto Sans CJK SC,sans-serif"><rect width="100" height="100" fill="#ECECEC"/>
<rect y="80" width="100" height="15" fill="#FDFDFD"/><rect y="95" width="100" height="5" fill="#E7E7E7"/>
<path d="M47 95h7l-3.500 3z" fill="#FDFDFD"/>
<text x="55" y="14" font-size="6.400" fill="#6A6A6A" text-anchor="middle">购买理由</text>
<g filter="url(#b05)">
<path d="M0 28h82l-9 9H50" stroke="#DADADA" stroke-width="0.800" fill="none"/>
<path d="M31 37h69" stroke="#DCDCDC" stroke-width="0.800" fill="none"/>
<clipPath id="t1"><path d="M0 28h40L20 45.500z"/></clipPath>
<g clip-path="url(#t1)"><rect x="0" y="28" width="40" height="18" fill="#EEF0EE"/>
<path d="M1 28h12v9z" fill="#9CC67C"/>
<rect x="12" y="28" width="28" height="18" fill="#5A6168"/>
<rect x="18" y="33" width="9" height="13" fill="#D5DEE6"/>
<ellipse cx="22" cy="40" rx="3" ry="3.800" fill="#5E7292"/>
<rect x="27.500" y="28" width="5" height="18" fill="#A9BDC0"/></g>
<path d="M0 32l5 4.500L0 42z" fill="#A9A9A9"/>
<path d="M31 37.500h38.500L50 56z" fill="#F5F5F5"/>
<path d="M36 41.500c8-5 19-5 27 0l-2 7H39z" fill="#F5F5F5"/>
<circle cx="41" cy="41" r="2.600" fill="#E9C3A0"/><circle cx="47.500" cy="44" r="2.400" fill="#E6BE9C"/><circle cx="52.500" cy="43.500" r="2.400" fill="#E8C4A4"/><circle cx="58" cy="41.500" r="2.700" fill="#E7BE98"/>
<path d="M38.500 38.500c1-2 4-2 5 0z" fill="#4A3426"/><path d="M55.500 39c1-2.500 4.500-2.500 5 0z" fill="#4A3426"/><path d="M45.500 42c1-2 3.500-2 4.500 0z" fill="#5A3A2A"/><path d="M50.500 41.500c1-2 3.500-2 4.500 0z" fill="#5A3A2A"/>
<path d="M37 44c2-1 5-1 6 0l1 4.500h-6z" fill="#9DBD58"/><path d="M55 45c2-1.500 6-1.500 7 0l-1 4h-6z" fill="#EE8A3A"/><path d="M45 46.500h10v2.500H45z" fill="#EFE6DC"/>
<path d="M0 47h38L19 63z" fill="#E9EBF1"/>
<path d="M3 47h4v4H3zM10 47h5v6h-5zM19 47h5v4h-5zM29 47h5v3h-5z" fill="#CFCFD3"/>
<circle cx="22" cy="54" r="5" fill="#D7E2F1"/><circle cx="23" cy="54" r="2" fill="#A8C4E4"/>
<path d="M8 55l8-3 3 3-5 5z" fill="#7C809A"/><path d="M13 58l8 0 3 3-5 2z" fill="#A1A5BA"/>
<path d="M59.500 48.500h39.500L79.500 67z" fill="#BCA57E"/>
<path d="M59.500 48.500h12l-1 7-5 0z" fill="#A53A4C"/><path d="M66 52h5v5h-4z" fill="#E8E4DA"/>
<path d="M74 50h22v3H74zM73 55h20v3H73zM75 60h14v3H75z" fill="#DCCFB2"/>
<path d="M92 48.500h7l-3 3z" fill="#7E9A58"/>
<path d="M100 51.500L86.500 63.200 100 75z" fill="#A0A0A0"/>
<path d="M100 57L93 63.200 100 69.500z" fill="#747474"/>
<path d="M17 65h41" stroke="#D8D8D8" stroke-width="0.800" fill="none"/>
</g>
<g fill="#2E2E2E" opacity="0.750"><rect x="40.500" y="20.300" width="3.200" height="2.700"/><rect x="45" y="20.300" width="16" height="2.700"/><rect x="69.500" y="39.300" width="3.200" height="2.700"/><rect x="74" y="39.300" width="16" height="2.700"/><rect x="26.500" y="58.300" width="3.200" height="2.700"/><rect x="31" y="58.300" width="16" height="2.700"/><rect x="57" y="68.300" width="3.200" height="2.700"/><rect x="61.500" y="68.300" width="20" height="2.700"/></g>
<g fill="#9A9A9A" opacity="0.800"><rect x="41" y="25.200" width="17" height="1"/><rect x="69.500" y="44.200" width="15" height="1"/><rect x="26.500" y="63.200" width="18" height="1"/><rect x="57" y="73.200" width="14" height="1"/></g>
<path d="M37 25.500h2l-1 1.200zM66.500 44.500l1.500-1v2zM24.500 63l1-1.200v2.400zM74 74.500h2l-1-1.200z" fill="#333"/>
<g fill="none" stroke="#8ED6CE" stroke-width="0.500"><path d="M9 83l5.500 3v6L9 95l-5.500-3v-6zM1 94l7-4M14 85l6-4"/><rect x="5.500" y="86.500" width="7" height="5"/></g>
<g fill="#666" opacity="0.700"><rect x="29.500" y="86.800" width="17" height="3.600"/><rect x="48.500" y="88.200" width="1" height="1"/><rect x="52" y="86.800" width="18.500" height="3.600"/></g>
</svg></div><div class="c c3"><span class="zh">国内消费一周热点</span></div><div class="c c4"><div class="sw"></div></div><div class="c c5"><div class="btn"><span>编辑</span></div><div class="btn"><span>删除</span></div></div></div><div class="hl" style="top:1068px"></div>
<div class="row" style="top:1070px"><div class="c c1"><span>4</span></div><div class="img" style=top:34px><svg width="91" height="83" viewBox="0 0 91 83" font-family="Liberation Sans,Noto Sans CJK SC,sans-serif"><rect width="91" height="83" fill="#E9F3FD"/>
<text transform="translate(4.500 26.300) scale(1 1.300)" font-size="10" font-weight="bold" fill="#2B303C" textLength="40" lengthAdjust="spacingAndGlyphs">手机专区</text>
<text transform="translate(4.800 43.500) scale(1 1.250)" font-size="7" fill="#9A9DA3" textLength="26" lengthAdjust="spacingAndGlyphs">888元起</text>
<g filter="url(#b05)"><rect x="64" y="14.500" width="20" height="63" rx="2.200" fill="#DCC5B8"/>
<rect x="65" y="17.500" width="18" height="57.500" rx="1" fill="url(#scr)"/>
<path d="M65 64l5-3 4 2 5-4 4 3v4H65z" fill="#E8EDF4" opacity="0.850"/>
<rect x="69.500" y="24" width="9" height="3" fill="#C9D2E4" opacity="0.850"/></g>
</svg></div><div class="c c3"><span class="zh">一图带你读懂2020年中国经济年报</span></div><div class="c c4"><div class="sw"></div></div><div class="c c5"><div class="btn"><span>编辑</span></div><div class="btn"><span>删除</span></div></div></div><div class="hl" style="top:1218px"></div>
<div class="row" style="top:1220px"><div class="c c1"><span>3</span></div><div class="img"><svg width="100" height="100" viewBox="0 0 100 100"><rect width="100" height="100" fill="#E1F5D5"/>
<g filter="url(#b05)">
<ellipse cx="50" cy="80.300" rx="40" ry="1.600" fill="#CFE7EE"/>
<path d="M78 70c4 1 7 4 8 8-3 2-8 2-12 1z" fill="#6A2F1B"/>
<path d="M55 78c2 2 22 3 24 0v3H56z" fill="#E88562"/>
<ellipse cx="71.500" cy="60.500" rx="14" ry="20" fill="#F4B394"/>
<path d="M71 42c9 2 12 12 11 20s-6 14-12 14-11-5-11-12 4-11 9-11 8 3 8 8-3 7-6 7-5-2-5-5 2-4 4-4" fill="none" stroke="#EA8562" stroke-width="3.200"/>
<circle cx="70" cy="61" r="2" fill="#F6C2A8"/>
<path d="M21 41l6 0c8-3 18-3 26 0l5-2c2 8 3 20 1 29l-2 6H22c-3-10-3-24-1-33z" fill="#7C3F23"/>
<path d="M22 42l4 1-3 8z" fill="#FBF3D8"/><path d="M57 40l-5 3 6 6z" fill="#FBF3D8"/>
<ellipse cx="39.500" cy="73" rx="21" ry="7.500" fill="#FCF6DE"/>
<path d="M22 70c6-4 12-3 17 0 5-3 12-4 18 0v4H22z" fill="#FCF6DE"/>
<path d="M23 79c2-2 6-2 8 0zM46 79.500c2-2 6-2 8 0z" fill="#F6E3C4"/>
<path d="M21 66h15M43 66h14" stroke="#2A1A12" stroke-width="1.100"/>
<circle cx="25.300" cy="61.500" r="10" fill="none" stroke="#4A281A" stroke-width="1.300"/>
<circle cx="48.800" cy="61.500" r="10.600" fill="none" stroke="#4A281A" stroke-width="1.300"/>
<path d="M35 64h3.500" stroke="#4A281A" stroke-width="1.200"/>
<path d="M31 28c3-3 9-3 12 0 1 4 0 8-2 10l6 4c2-1 3-3 2-5 2 0 2 4-1 6l-6 0-2 5-3-5h-3l-1 5-3-1 1-9c-2-3-2-7 0-10z" fill="#E9AA5E"/>
<path d="M29 27l2-3 3 3zM41 27l2-3 1 4z" fill="#E9AA5E"/>
<ellipse cx="36" cy="34.500" rx="4.500" ry="2.500" fill="#F5D09A"/>
<circle cx="33.500" cy="31" r="0.700" fill="#3A2418"/><circle cx="39" cy="31" r="0.700" fill="#3A2418"/>
<path d="M31 20h8v3l-1 3h-6l-1-3z" fill="#ECEFF2"/><path d="M30.500 19.500h8.500v2.500h-8.500z" fill="#6F7684"/><path d="M41.500 20v6" stroke="#6F7684" stroke-width="0.700"/>
<path d="M33 45c3-3 7-2 8 1-2 3-6 3-8-1z" fill="#6B3119"/><path d="M31 51c3 2 6 2 9 0M37 55c3 1 6 0 8-2" stroke="#6B3119" stroke-width="1" fill="none"/>
<circle cx="58" cy="26.500" r="3" fill="#A9D7E2"/><circle cx="69" cy="22.500" r="2.500" fill="#B5DEE6"/>
<ellipse cx="66.500" cy="31" rx="9.500" ry="9" fill="#B7E0E8"/>
<path d="M58 33c1 5 6 8 11 7 4-1 7-4 7-8-2 5-13 8-18 1z" fill="#94CBDA"/>
<path d="M65 26l3 5 2-1" stroke="#7BB8C8" stroke-width="0.700" fill="none"/>
<path d="M51.500 22.500l0.800 3M53 27l0.500 1.500M79.500 35l0.500 3M81.500 36l0.300 2" stroke="#9FD0DC" stroke-width="0.600"/>
</g></svg></div><div class="c c3"><span>33333333333333333333333333333333333</span></div><div class="c c4"><div class="sw"></div></div><div class="c c5"><div class="btn"><span>编辑</span></div><div class="btn"><span>删除</span></div></div></div><div class="hl" style="top:1368px"></div>
<div class="row" style="top:1370px"><div class="c c1"><span>3</span></div><div class="img"><svg width="100" height="100" viewBox="0 0 100 100"><use href="#bag"/></svg></div><div class="c c3"><span>333</span></div><div class="c c4"><div class="sw"></div></div><div class="c c5"><div class="btn"><span>编辑</span></div><div class="btn"><span>删除</span></div></div></div><div class="hl" style="top:1518px"></div>
<div class="row" style="top:1520px"><div class="c c1"><span>3</span></div><div class="img"><svg width="100" height="100" viewBox="0 0 100 100"><use href="#bag"/></svg></div><div class="c c3"><span>33</span></div><div class="c c4"><div class="sw"></div></div><div class="c c5"><div class="btn"><span>编辑</span></div><div class="btn"><span>删除</span></div></div></div><div class="hl" style="top:1668px"></div>
<div class="row" style="top:1670px"><div class="c c1"><span>3</span></div><div class="img"><svg width="100" height="100" viewBox="0 0 100 100"><use href="#bag"/></svg></div><div class="c c3"><span>22</span></div><div class="c c4"><div class="sw"></div></div><div class="c c5"><div class="btn"><span>编辑</span></div><div class="btn"><span>删除</span></div></div></div><div class="hl" style="top:1818px"></div>
<div class="abs" id="pbar"></div>
<div class="pg" style="left:2830px"><svg width="24" height="24" viewBox="0 0 24 24"><path d="M16 3l-9 9 9 9" stroke="#C0C4CC" stroke-width="2.200" fill="none"/></svg></div>
<div class="pg on" style="left:2910px"><span>1</span></div><div class="pg" style="left:2990px"><span>2</span></div>
<div class="pg" style="left:3070px"><svg width="24" height="24" viewBox="0 0 24 24"><path d="M8 3l9 9-9 9" stroke="#303133" stroke-width="2.200" fill="none"/></svg></div>
<div class="abs" id="goto">前往</div><div class="abs" id="pin">1</div><div class="abs" id="pye">页</div>
<div class="abs" id="fade"></div>
</body></html>
